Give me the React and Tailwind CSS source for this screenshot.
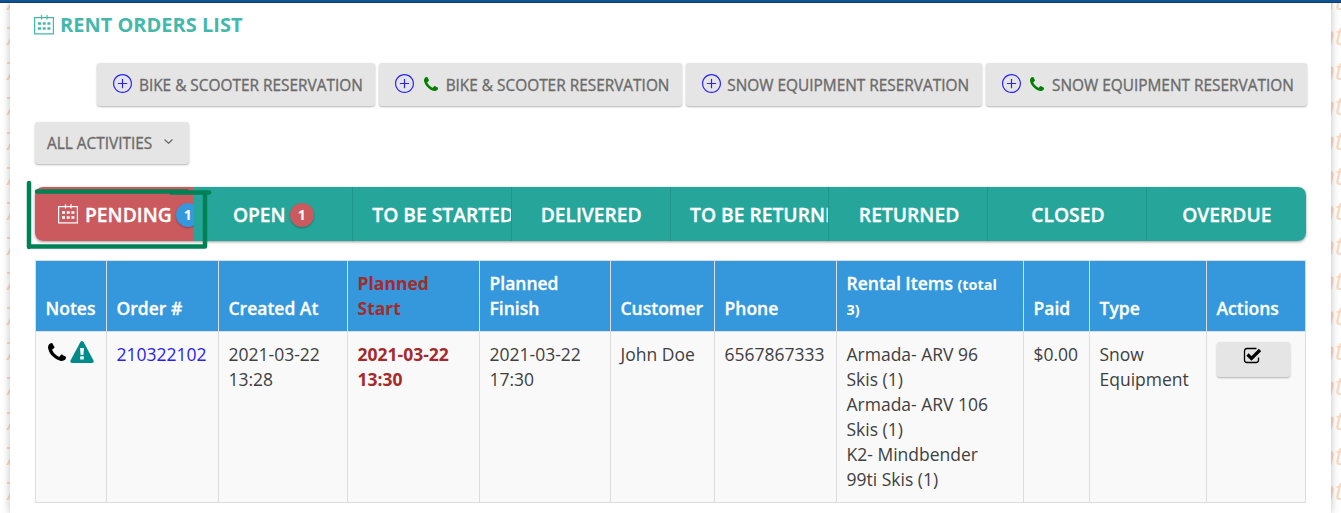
import React from 'react';
import { SlPlus } from 'react-icons/sl';

const actions = [
  { label: "BIKE & SCOOTER RESERVATION", phone: false, width: "w-[278px]" },
  { label: "BIKE & SCOOTER RESERVATION", phone: true, width: "w-[303px]" },
  { label: "SNOW EQUIPMENT RESERVATION", phone: false, width: "w-[296px]" },
  { label: "SNOW EQUIPMENT RESERVATION", phone: true, width: "w-[321px]" },
];

const tabs = [
  { label: "PENDING", count: 1, active: true, pad: "pl-[23px]" },
  { label: "OPEN", count: 1, pad: "pl-[39px]" },
  { label: "TO BE STARTED", pad: "pl-[19.5px]" },
  { label: "DELIVERED", pad: "pl-[29px]" },
  { label: "TO BE RETURNED", pad: "pl-[19.5px]" },
  { label: "RETURNED", pad: "pl-[29.5px]" },
  { label: "CLOSED", pad: "pl-[43px]" },
  { label: "OVERDUE", pad: "pl-[35px]" },
];

const columns = [
  { label: "Notes", width: 71 },
  { label: "Order #", width: 112 },
  { label: "Created At", width: 129 },
  { label: "Planned Start", width: 132, highlight: true },
  { label: "Planned Finish", width: 131 },
  { label: "Customer", width: 104 },
  { label: "Phone", width: 122 },
  { label: "Rental Items", note: "(total 3)", width: 187 },
  { label: "Paid", width: 66 },
  { label: "Type", width: 117 },
  { label: "Actions", width: 99 },
];

const rows = Array.from({ length: 16 }, (_, i) => i);

const CalendarIcon = ({ className }) => (
  <svg viewBox="0 0 20 20" className={className} fill="none" stroke="currentColor">
    <path d="M.6 2.600h18.800v16.200H.6z" strokeWidth="1.200" />
    <path d="M7.500 0v4.500M13 0v4.500" strokeWidth="1.200" />
    <path d="M4 8.500h3M8.700 8.500h3M13.400 8.500h3M4 13.500h3M8.700 13.500h3M13.400 13.500h3" strokeWidth="2.500" />
  </svg>
);

const Phone = ({ className }) => (
  <svg viewBox="0 0 1408 1408" className={className} fill="currentColor">
    <path d="M1408 1112q0 27-10 70.500t-21 68.500q-21 50-122 106-94 51-186 51-27 0-53-3.500t-57.500-12.500-47-14.500-55.500-20.500-49-18q-98-35-175-83-127-79-264-216t-216-264q-48-77-83-175-3-9-18-49t-20.500-55.500-14.500-47-12.500-57.500-3.500-53q0-92 51-186 56-101 106-122 25-11 68.500-21t70.500-10q14 0 21 3 18 6 53 76 11 19 30 54t35 63.500 31 53.500q3 4 17.500 25t21.500 35.500 7 28.500q0 20-28.500 50t-62 55-62 53-28.500 46q0 9 5 22.500t8.500 20.500 14 24 11.500 19q76 137 174 235t235 174q2 1 19 11.500t24 14 20.500 8.500 22.500 5q18 0 46-28.500t53-62 55-62 50-28.500q14 0 28.500 7t35.500 21.500 25 17.500q25 15 53.500 31t63.500 35 54 30q70 35 76 53 3 7 3 21z" />
  </svg>
);

const Warning = () => (
  <svg viewBox="0 0 24 22" className="w-6 h-[22px] -mt-px text-[#008b8b]">
    <path fill="currentColor" d="M12 0Q13 0 13.600 1L23.500 19.500Q24.300 22 22 22H2Q-.3 22 .5 19.500L10.400 1Q11 0 12 0Z" />
    <path fill="#f9f9f9" d="M10 7h4l-.6 7h-2.800zM10.200 15.300h3.600v3.200h-3.600z" />
  </svg>
);

const CheckIcon = () => (
  <svg viewBox="0 0 19 17" className="w-[19px] h-[17px] -ml-px" fill="none" stroke="#000">
    <path d="M13.500 1.500H4Q1.500 1.500 1.500 4v9q0 2.500 2.500 2.500h9q2.500 0 2.500-2.500v-2.500" strokeWidth="1.300" />
    <path d="M4.500 7.500 8.500 11.500 17 3" strokeWidth="3.200" />
  </svg>
);

// Faded wallpaper lettering that peeks out on both sides of the page
const SideStrip = ({ text, className }) => (
  <div className={`shrink-0 overflow-hidden whitespace-nowrap italic text-[26px] leading-[35px] text-[#fbd8be] ${className}`}>
    {rows.map((i) => (
      <div key={i}>{text}</div>
    ))}
  </div>
);

const App = () => {
  return (
    <div className="relative w-[1341px] h-[513px] overflow-hidden bg-white font-['Open_Sans',sans-serif] text-[17.5px] leading-[25px] text-[#3f3f3f]">
      <div className="relative z-20 h-[3px] bg-[#115293] border-b border-[#0d3c70]" />
      <div className="flex h-[510px]">
        <SideStrip text="7" className="w-[10px] pl-[4px] -mt-5" />
        <main className="w-[1321px] shrink-0 h-[510px] bg-white pl-6 pr-6 shadow-[0_0_8px_rgba(0,0,0,0.25)] z-10">
          <h1 className="flex items-center h-[43px] text-[20px] font-bold text-[#45b8ac]">
            <CalendarIcon className="w-5 h-5 mr-[6px] mt-px" />
            RENT ORDERS LIST
          </h1>

          {/* Reservation buttons */}
          <div className="flex justify-end gap-[3.7px] mt-[17px] mr-[0.5px]">
            {actions.map((a, i) => (
              <button
                key={i}
                className={`flex items-center h-[43px] pt-[2px] pl-4 rounded-[3px] bg-[#e5e5e5] shadow-[0_1px_2px_rgba(0,0,0,0.3)] text-[15.4px] font-medium [-webkit-text-stroke:0.35px] text-[#6b6b6b] whitespace-nowrap ${a.width}`}
              >
                <SlPlus className="w-[19px] h-[19px] text-[#2a22f5] mr-[6.5px] -mt-1" />
                {a.phone && <Phone className="w-[14px] h-[14px] text-[#008000] ml-[3px] mr-2 -mt-[4px]" />}
                {a.label}
              </button>
            ))}
          </div>

          <button className="flex items-center w-[154px] h-[42px] mt-4 ml-[0.5px] pt-px pl-[12.5px] rounded-[3px] bg-[#e5e5e5] shadow-[0_1px_2px_rgba(0,0,0,0.3)] text-[15.4px] font-medium [-webkit-text-stroke:0.35px] text-[#6b6b6b]">
            ALL ACTIVITIES
            <svg viewBox="0 0 9 5" className="w-[9px] h-[5px] ml-[12px] -mt-[5px]" fill="none" stroke="currentColor" strokeWidth="1.200">
              <path d="M.5.5 4.500 4.300 8.500.5" />
            </svg>
          </button>

          {/* Order status tabs */}
          <div className="flex w-[1271px] h-[54px] mt-[23px] ml-px rounded-lg overflow-clip shadow-[0_1px_3px_rgba(0,0,0,0.4)]">
            {tabs.map((t) => (
              <div
                key={t.label}
                className={`flex w-[159px] items-center pt-px overflow-hidden whitespace-nowrap text-[19.25px] font-semibold text-white ${t.pad} ${t.active ? "bg-[#cb5a5e]" : "bg-[#26a69a] border-r border-[#22958b] last:border-r-0"}`}
              >
                {t.active && <CalendarIcon className="w-5 h-5 shrink-0 mr-[7px] -mt-[2px]" />}
                <span className="[-webkit-text-stroke:0.3px]">{t.label}</span>
                {t.count && (
                  <span className={`flex items-center justify-center shrink-0 w-6 h-6 ml-1 rounded-full text-[14px] font-bold shadow-[0_1px_2px_rgba(0,0,0,0.3)] ${t.active ? "bg-[#3598dc]" : "bg-[#cb5a5e]"}`}>
                    {t.count}
                  </span>
                )}
              </div>
            ))}
          </div>

          {/* Orders */}
          <table className="w-[1271px] mt-[19px] ml-px table-fixed border-collapse text-left">
            <colgroup>
              {columns.map((c) => (
                <col key={c.label} style={{ width: c.width }} />
              ))}
            </colgroup>
            <thead>
              <tr className="h-[70px] bg-[#3598dc] text-white align-bottom">
                {columns.map((c) => (
                  <th
                    key={c.label}
                    className={`border border-[#ddd] pl-[9.5px] py-[10px] ${c.highlight ? "text-[#a52a2a] font-bold" : "font-semibold [-webkit-text-stroke:0.3px]"} ${c.note ? "pr-6" : "pr-[8px]"}`}
                  >
                    {c.label} {c.note && <span className="text-[14.4px] leading-none font-bold [-webkit-text-stroke:0]">{c.note}</span>}
                  </th>
                ))}
              </tr>
            </thead>
            <tbody>
              <tr className="h-[171px] bg-[#f9f9f9] align-top [&>td]:border [&>td]:border-[#ddd] [&>td]:pl-[9.5px] [&>td]:py-[10px]">
                <td>
                  <div className="flex items-start pl-[2.5px]">
                    <Phone className="w-[18px] h-[18px] mt-px mr-1 text-black" />
                    <Warning />
                  </div>
                </td>
                <td className="text-[#2a22f5]">210322102</td>
                <td className="pr-2">2021-03-22 13:28</td>
                <td className="pr-2 font-bold text-[#a52a2a]">2021-03-22 13:30</td>
                <td className="pr-2">2021-03-22 17:30</td>
                <td className="whitespace-nowrap">John Doe</td>
                <td>6567867333</td>
                <td className="pr-6">
                  Armada- ARV 96 Skis (1)
                  <br />
                  Armada- ARV 106 Skis (1)
                  <br />
                  K2- Mindbender 99ti Skis (1)
                </td>
                <td>$0.00</td>
                <td>Snow Equipment</td>
                <td>
                  <button className="flex justify-center w-[73px] h-[35px] pt-[5px] rounded-[3px] bg-[#e5e5e5] shadow-[0_1px_2px_rgba(0,0,0,0.3)]">
                    <CheckIcon />
                  </button>
                </td>
              </tr>
            </tbody>
          </table>
        </main>
        <SideStrip text="nt" className="w-[10px] -mt-5 -indent-[11px]" />
      </div>

      {/* Hand-drawn marker around the pending tab */}
      <svg viewBox="0 0 190 80" className="absolute left-[22px] top-[176px] w-[190px] h-[80px] z-20" fill="none" stroke="#008055" strokeWidth="4.500" strokeLinecap="round" strokeLinejoin="round">
        <path d="M7 7V71M15 15.500H165M149 16.500H187M183 17V70M7 70.500H183" />
      </svg>
    </div>
  );
};

export default App;
